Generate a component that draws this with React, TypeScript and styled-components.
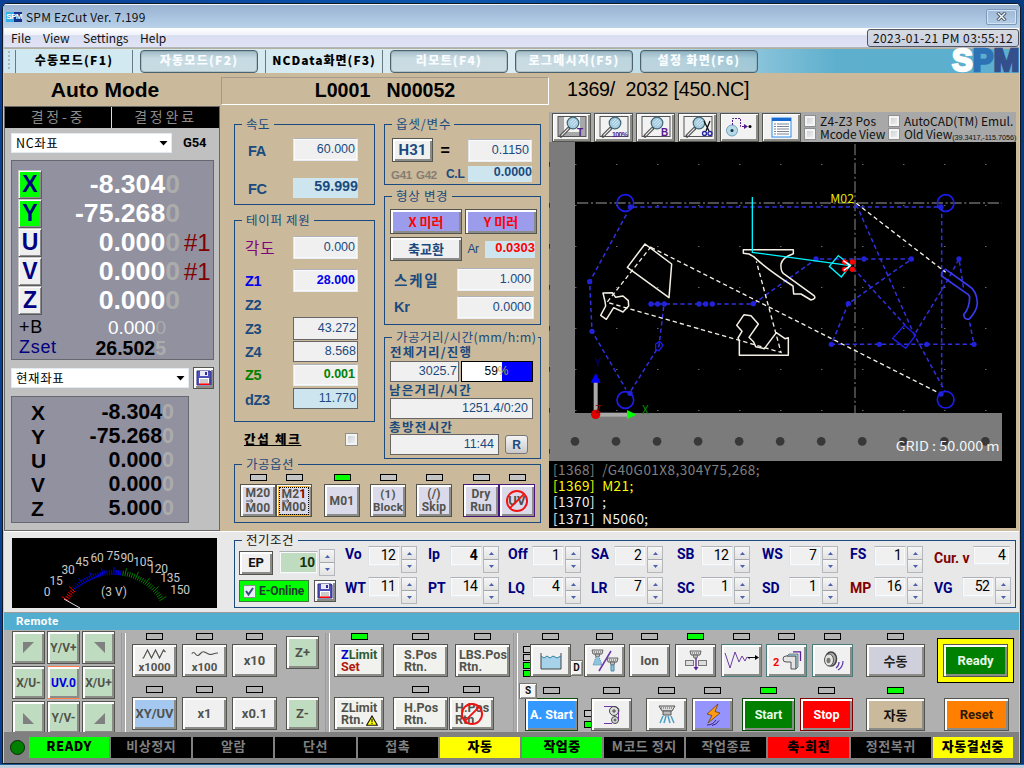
import React from 'react';
import styled, { createGlobalStyle, css } from 'styled-components';

const SANS = '"Liberation Sans", "Noto Sans CJK KR", sans-serif';
const KR = '"Noto Sans CJK KR", sans-serif';
const UI = 'Roboto, "Noto Sans CJK KR", sans-serif';

const NAVY = '#1b4a7e';
const TAN = '#cab99a';
const LIME = '#00ff00';

const Global = createGlobalStyle`
  * { box-sizing: border-box; }
  body { margin: 0; width: 1024px; height: 768px; overflow: hidden; background: #0a4fa8; font-family: ${SANS}; }
  svg { display: block; flex: none; }
`;

/* ---------- window chrome ---------- */
const Desktop = styled.div`
  width: 1024px; height: 768px; overflow: hidden;
  padding: 3px 2px 0 2px;
  background: linear-gradient(90deg, #0a3f95, #0b55ac 45%, #083c84 80%, #083a80);
`;
const Window = styled.div`
  width: 1019px; height: 761px;
  border: 1px solid #101820; border-radius: 5px 5px 0 0;
  background: #a9d4ee;
  padding: 0 1px 3px 1px;
  display: flex; flex-direction: column; overflow: hidden;
`;
const Taskbar = styled.div`
  height: 4px; margin: 0 -2px; background: #c2cddb; border-top: 1px solid #1c5f9c;
`;
const TitleBar = styled.div`
  height: 24px; flex: none; display: flex; align-items: center;
  border-top: 1px solid #f4f9ff;
  padding: 0 1px 0 2px;
  background: linear-gradient(#98b2d0, #a8c2de 50%, #bad2ea);
  font: 12px ${UI}; color: #111;
`;
const AppBadge = styled.span`
  width: 16px; height: 10px; margin-right: 4px; text-align: center;
  background: linear-gradient(90deg, #35b0e8 50%, #14338a 50%);
  color: #fff; font: bold 8px/10px ${SANS}; letter-spacing: -0.6px;
`;
const Title = styled.span`flex: 1; font: 12px/16px ${KR}; letter-spacing: 0.22px;`;
const CloseBox = styled.span`
  width: 31px; height: 16px; margin-right: 1px;
  border: 1px solid #7d99ba; border-radius: 2px; box-shadow: inset 0 0 0 1px #d5e4f3;
  display: flex; align-items: center; justify-content: center;
`;
const MenuBar = styled.div`
  height: 20px; flex: none; display: flex; align-items: center; padding-left: 7px;
  background: linear-gradient(#fff 0, #f0f2fa 35%, #d9def1 40%, #dfe3f4 90%);
  border-bottom: 1px solid #b4b6bf;
`;
const MenuItem = styled.span<{ $w: number }>`
  width: ${p => p.$w}px; font: 12px/16px ${KR}; color: #111; white-space: nowrap;
`;
const Clock = styled.span`
  margin-left: auto; width: 152px; height: 18px;
  border: 1px solid #505560; border-radius: 3px; background: linear-gradient(#d6dae0, #c9d0e2);
  font: 12px/15px ${KR}; color: #111; text-align: center; white-space: nowrap; letter-spacing: 0.42px;
`;
const ModeBar = styled.div`
  height: 25px; flex: none; display: flex; align-items: center;
  border-top: 1px solid #b3b09c;
  background: linear-gradient(90deg, #cfe8f1 0, #dcecf2 50%, #bcdce8 65%, #5eafce 82%, #5cafcf);
  padding-left: 4px;
`;
const Grip = styled.i`width: 2px; height: 20px; margin-right: 5px; background: repeating-linear-gradient(#a9b7be 0 2px, transparent 2px 4px);`;
const ModeSlot = styled.span<{ $raised?: boolean; $ls?: number }>`
  width: 118px; height: 23px; margin-right: 7px; flex: none;
  font: 900 12px/19px ${KR}; letter-spacing: ${p => p.$ls ?? 1.3}px; text-align: center; white-space: pre; color: #000;
  border-left: 1px solid #687a84; border-right: 1px solid #687a84;
  ${p => p.$raised && css`
    color: #fafdff; border: 1px solid #4d626c; border-radius: 4px; line-height: 17px;
    background: linear-gradient(rgba(110,140,155,.5), rgba(180,200,208,.45) 35%, rgba(190,205,210,.5));
    box-shadow: inset 0 0 0 1px rgba(120,145,155,.35);
  `}
`;
const Logo = styled.span`
  width: 70px; height: 24px; margin-left: auto; display: flex; align-items: center;
  font: bold 31px/24px ${SANS}; -webkit-text-stroke: 2.4px currentColor;
`;
const LogoS = styled.span`color: #fff; width: 29px; padding-left: 3px;`;
const LogoP = styled.span`color: #2d72b4; width: 23px;`;
const LogoM = styled.span`color: #34508c;`;

/* ---------- main area ---------- */
const Main = styled.div`height: 458px; flex: none; display: flex; background: ${TAN};`;
const LeftCol = styled.div`width: 216px; flex: none; display: flex; flex-direction: column;`;
const ModeTitle = styled.h1`
  margin: 0; height: 33px; padding-right: 14px; text-align: center;
  font: bold 21px/34px ${SANS}; color: #000;
`;
const LeftPanel = styled.div`
  flex: 1; border: 1px solid #676767; background: #c0c0c0; display: flex; flex-direction: column;
`;
const DecisionBar = styled.div`
  height: 21px; flex: none; display: grid; grid-template-columns: 106px 1fr; background: #000;
`;
const Decision = styled.span`
  color: #8b8b8b; font: 14px/18px ${KR}; letter-spacing: 2.8px; text-align: center;
  & + & { border-left: 1px solid #ddd; }
`;
const ComboRow = styled.div<{ $mt: number }>`
  display: flex; align-items: center; margin: ${p => p.$mt}px 0 0 6px; height: 22px; gap: 4px;
`;
const Combo = styled.span<{ $w: number }>`
  width: ${p => p.$w}px; height: 20px; background: #fff; border: 1px solid #e4eaf2;
  display: flex; align-items: center; justify-content: space-between; padding: 0 3px 0 4px;
  font: 12.5px/18px ${KR}; letter-spacing: 0.6px; color: #000;
`;
const GCode = styled.b`font: bold 13px ${UI}; margin-left: 7px; letter-spacing: -0.1px; padding-bottom: 1px;`;
const AxisPanel = styled.div<{ $w: number; $h: number; $mt: number }>`
  width: ${p => p.$w}px; height: ${p => p.$h}px; margin: ${p => p.$mt}px 0 0 6px; flex: none;
  background: #9191a0; border: 1px solid #676770; display: flex; flex-direction: column;
`;
const AxisRow = styled.div<{ $h: number }>`height: ${p => p.$h}px; display: flex; align-items: center; padding-left: 6px; flex: none;`;
const AxisKey = styled.span<{ $on?: boolean }>`
  width: 24px; height: 29px; border: 1px solid; border-color: #c8c8c8 #5b5b5b #5b5b5b #c8c8c8;
  box-shadow: inset 1px 1px 0 #fff, inset -1px -1px 0 #8c8c8c;
  background: ${p => (p.$on ? LIME : '#efefef')}; color: #000080;
  font: bold 23px/27px ${SANS}; text-align: center; flex: none;
`;
const Reading = styled.span<{ $size: number; $color: string; $w: number; $bold?: boolean; $drop?: number }>`
  width: ${p => p.$w}px; text-align: right; white-space: nowrap; line-height: 1; padding-top: ${p => p.$drop || 0}px;
  font-size: ${p => p.$size}px; font-weight: ${p => (p.$bold ? 'bold' : 'normal')}; color: ${p => p.$color};
  i { font-style: normal; color: #acacac; }
`;
const Sharp = styled.span`color: #800000; font-size: 24px; margin-left: 4px; line-height: 1;`;
const SmallAxis = styled.span<{ $c: string; $size: number }>`
  width: 42px; color: ${p => p.$c}; font-size: ${p => p.$size}px; line-height: 1; padding-left: 1px; padding-top: 1px; letter-spacing: 0.7px;
`;
const PlainAxis = styled.b`width: 30px; padding-left: 13px; font-size: 21px; line-height: 1; padding-top: 1px;`;

const MidCol = styled.div`width: 329px; flex: none; display: flex; flex-direction: column; padding-top: 4px;`;
const LineTitle = styled.h2`
  margin: 0 0 0 1px; height: 28px; border: 1px solid; border-color: #a5998d #fff #fff #a5998d;
  font: bold 19.6px/25px ${SANS}; white-space: pre; text-align: center;
`;
const GroupGrid = styled.div`display: flex; gap: 9px; padding: 19px 0 0 14px; height: 355px;`;
const GroupStack = styled.div`display: flex; flex-direction: column;`;
const Group = styled.section<{ $w: number; $h: number; $mb?: number; $mt?: number }>`
  width: ${p => p.$w}px; height: ${p => p.$h}px; margin-bottom: ${p => p.$mb || 0}px; margin-top: ${p => p.$mt || 0}px; flex: none;
  border: 1px solid ${NAVY}; display: flex; flex-direction: column; align-items: flex-start;
`;
const Legend = styled.span<{ $w: number; $bg?: string; $c?: string; $ls?: number }>`
  width: ${p => p.$w}px; height: 16px; margin: -9px 0 -7px 7px; padding-left: 4px; flex: none;
  background: ${p => p.$bg || TAN}; color: ${p => p.$c || NAVY};
  font: 12.5px/16px ${KR}; white-space: nowrap; letter-spacing: ${p => p.$ls ?? 0.5}px;
`;
const FieldRow = styled.div<{ $h: number; $mt?: number; $pl?: number }>`
  height: ${p => p.$h}px; margin-top: ${p => p.$mt || 0}px; padding-left: ${p => p.$pl ?? 10}px;
  display: flex; align-items: center; flex: none;
`;
const Caption = styled.span<{ $w: number; $c?: string; $size?: number; $kr?: boolean; $plain?: boolean; $ls?: number; $dy?: number }>`
  width: ${p => p.$w}px; color: ${p => p.$c || NAVY}; white-space: nowrap; flex: none;
  font: ${p => (p.$plain ? 'normal' : 'bold')} ${p => p.$size || 14.5}px/1.1 ${p => (p.$kr ? KR : SANS)};
  letter-spacing: ${p => p.$ls ?? (p.$kr ? 1 : -0.3)}px;
  padding-top: ${p => p.$dy ?? (p.$kr ? 0 : 2)}px;
`;
type FieldKind = 'soft' | 'line' | 'flat';
const Field = styled.span<{ $w: number; $h: number; $kind?: FieldKind; $bg?: string; $c?: string; $bold?: boolean; $size?: number; $pr?: number }>`
  width: ${p => p.$w}px; height: ${p => p.$h}px; flex: none; text-align: right; white-space: nowrap;
  background: ${p => p.$bg || '#f0f0f0'}; color: ${p => p.$c || NAVY};
  padding-right: ${p => p.$pr ?? 2}px;
  font: ${p => (p.$bold ? 'bold' : 'normal')} ${p => p.$size || 12.5}px/${p => p.$h - 3}px ${SANS};
  ${p => (p.$kind === 'line'
    ? 'border: 1px solid #666;'
    : p.$kind === 'flat'
    ? 'border: 0;'
    : 'border: 1px solid; border-color: #aeb2b8 #e0e6ec #e6eef4 #dfe4e8; box-shadow: inset 0 0 0 1px #fafafa;')}
`;
const NumField = styled(Field)`font-family: ${UI}; font-size: 14px; letter-spacing: -0.8px; padding-right: 4px;`;
const Bevel = styled.span<{ $w: number; $h: number; $bg?: string; $c?: string; $size?: number; $ring?: string; $kr?: boolean; $lh?: number; $left?: number }>`
  position: relative; flex: none;
  width: ${p => p.$w}px; height: ${p => p.$h}px; background: ${p => p.$bg || '#f0f0f0'}; color: ${p => p.$c || '#52524c'};
  border: 1px solid ${p => p.$ring || '#55554f'};
  box-shadow: inset 2px 2px 0 #fff, inset -2px -2px 0 #8b8b87;
  display: flex; align-items: center; justify-content: ${p => (p.$left ? 'flex-start' : 'center')};
  padding-left: ${p => p.$left || 0}px;
  font: bold ${p => p.$size || 13}px/${p => p.$lh || 12}px ${p => (p.$kr ? KR : UI)};
  text-align: ${p => (p.$left ? 'left' : 'center')}; white-space: pre;
`;
const Check = styled.span<{ $s?: number }>`
  width: ${p => p.$s || 13}px; height: ${p => p.$s || 13}px; flex: none;
  border: 1px solid #8e8f8f; box-shadow: inset 0 0 0 2px #f4f4f4; background: linear-gradient(135deg, #c8ccd0, #f4f4f4);
`;
const Interference = styled.div`
  display: flex; align-items: center; justify-content: space-between; width: 114px; margin: 10px 0 0 10px;
  font: 900 12.5px/14px ${KR}; text-decoration: underline; white-space: pre; letter-spacing: 1.7px;
`;
const Progress = styled.span`
  width: 72px; height: 21px; margin-left: 2px; border: 1px solid #000; flex: none;
  background: linear-gradient(90deg, #fff 57%, #0000ff 57%);
  font: 12px/19px ${SANS}; color: #000; text-align: center; padding-right: 1px;
  em { font-style: normal; color: #a8a84a; }
`;
const ResetKey = styled.span`
  width: 23px; height: 19px; margin-left: 6px; border: 1px solid #777; border-radius: 3px;
  background: linear-gradient(#f4f4f4, #dcdcdc 60%, #c8c8c8); color: ${NAVY};
  font: bold 12px/18px ${SANS}; text-align: center;
`;
const OptionGroupWrap = styled.div`padding-left: 14px; margin-top: 4px;`;
const Led = styled.i<{ $on?: boolean; $bg?: string }>`
  width: 17px; height: 7px; flex: none; border: 1px solid #000; background: ${p => (p.$on ? LIME : p.$bg || '#c4c4c4')};
`;
const Station = styled.div<{ $ml?: number; $gap?: number; $lift?: number }>`
  display: flex; flex-direction: column; align-items: center; justify-content: flex-end;
  gap: ${p => p.$gap ?? 4}px; margin-left: ${p => p.$ml || 0}px; flex: none; position: relative;
  padding-bottom: ${p => p.$lift || 0}px;
`;
const Options = styled.div`display: flex; margin: 9px 0 0 5px; letter-spacing: 0.2px;`;
const FocusRing = styled.span`
  width: 30px; height: 28px; border: 1px dotted #000; outline: 1px solid #f5b53a; line-height: 13px; text-align: center;
  em { font-style: normal; color: #800000; }
`;

/* ---------- right column ---------- */
const RightCol = styled.div`flex: 1; display: flex; flex-direction: column;`;
const FileTitle = styled.div`height: 39px; padding: 4px 0 0 18px; font: 19.7px/24px ${SANS}; white-space: pre; letter-spacing: -0.25px;`;
const ViewBar = styled.div`width: 467px; height: 30px; flex: none; display: flex; align-items: center; background: #a8a8a8; padding-left: 3px; gap: 3px;`;
const ToolKey = styled.span`
  width: 39px; height: 29px; background: #f2f2f2; border: 1px solid #55554f; flex: none;
  box-shadow: inset 1px 1px 0 #fff, inset -2px -2px 0 #8b8b87;
  display: flex; align-items: center; justify-content: center;
`;
const ViewChecks = styled.div`
  display: grid; grid-template-columns: 84px 1fr; grid-auto-rows: 13px; flex: 1; align-content: center;
  font: 12px/13px ${KR}; color: #111;
`;
const ViewCheck = styled.label<{ $ls?: number }>`display: flex; align-items: center; gap: 4px; white-space: nowrap; letter-spacing: ${p => p.$ls ?? 0}px;`;
const Coord = styled.small`font: 7.3px/8px ${SANS}; align-self: flex-end; margin: 0 0 -2px -4px; letter-spacing: -0.08px;`;
const Program = styled.div`
  width: 467px; height: 66px; background: #000; padding: 0 0 0 4px; flex: none;
  font: 400 13.5px/14px ${KR}; white-space: pre; letter-spacing: 0.5px;
`;
const ProgramLine = styled.div<{ $c: string }>`color: ${p => p.$c}; height: 16.2px;`;

/* ---------- electric conditions ---------- */
const Electric = styled.div`
  height: 82px; flex: none; display: flex; background: #e8e8e8; border-top: 1px solid #fff; border-bottom: 1px solid #9a9a9a;
`;
const Meter = styled.div`width: 205px; height: 70px; margin: 6px 17px 0 8px; background: #000; flex: none;`;
const ElectricBody = styled.div`display: flex; width: 100%;`;
const EpBlock = styled.div`width: 110px; flex: none; display: flex; flex-direction: column; padding: 8px 0 0 4px;`;
const EpRow = styled.div<{ $mt?: number }>`display: flex; align-items: center; margin-top: ${p => p.$mt || 0}px;`;
const Online = styled.span`
  width: 70px; height: 22px; background: ${LIME}; border: 1px solid #3a7a3a; display: flex; align-items: center; gap: 3px; padding-left: 3px;
  font: bold 12px ${UI}; color: #1d3a2c; margin-right: 5px; white-space: nowrap; letter-spacing: -0.1px;
`;
const Params = styled.div`
  display: grid; grid-template-columns: 83px 80px 83px 86px 85px 88px 84px 1fr; grid-template-rows: 31px 31px; padding-top: 5px; flex: 1;
`;
const Param = styled.div`display: flex; align-items: flex-start;`;
const ParamName = styled.b<{ $w: number; $c?: string; $pt?: number }>`
  width: ${p => p.$w}px; padding-top: ${p => p.$pt ?? 1}px; color: ${p => p.$c || '#000080'}; font: bold 14px/15px ${UI}; white-space: nowrap; letter-spacing: 0;
`;
const Spin = styled.span`width: 16px; height: 27px; margin-left: 1px; display: flex; flex-direction: column; border: 1px solid #b4b8bc; background: #f6f6f6; flex: none;`;
const SpinHalf = styled.i`
  flex: 1; display: flex; align-items: center; justify-content: center; background: linear-gradient(#f6f6f6, #e2e2e2);
  & + & { border-top: 1px solid #a4a8ac; }
`;

/* ---------- remote ---------- */
const RemoteHead = styled.div`height: 17px; flex: none; background: #52aed0; color: #fff; font: bold 11.5px/16px ${UI}; padding-left: 12px; letter-spacing: 0.4px;`;
const Remote = styled.div`height: 102px; flex: none; display: flex; background: #b0b0b0; overflow: hidden;`;
const JogPad = styled.div`
  display: grid; grid-template-columns: repeat(3, 33px); grid-auto-rows: 33px; gap: 2px; padding: 1px 6px 0 8px; width: 117px; flex: none;
`;
const Section = styled.div<{ $w: number }>`
  width: ${p => p.$w}px; flex: none; margin-top: 3px; border-left: 1px solid #9a9a9a; box-shadow: inset 1px 0 0 #b0b0b0, inset 3px 0 0 #a8a8a8, inset 4px 0 0 #fff;
  display: flex; flex-direction: column;
`;
const KeyRow = styled.div<{ $mt?: number; $pl: number }>`display: flex; align-items: flex-end; height: 44px; flex: none; margin-top: ${p => p.$mt || 0}px; padding-left: ${p => p.$pl}px;`;
const ReadyFrame = styled.div`
  width: 77px; height: 45px; margin: 0 0 -6px 12px; background: #ffff00; border: 1px solid #000; display: flex; align-items: center; justify-content: center; flex: none;
`;
const SideLeds = styled.div<{ $gap: number; $pb?: number; $ml?: number }>`
  display: flex; flex-direction: column; gap: ${p => p.$gap}px; width: 7px; margin-left: ${p => p.$ml || 0}px; padding-bottom: ${p => p.$pb || 0}px; flex: none;
  i { width: 8px; height: 7px; border: 1px solid #000; background: #c4c4c4; }
  i[data-on='1'] { background: ${LIME}; }
`;
const MiniKey = styled.span<{ $x: number; $y: number; $w: number }>`
  position: absolute; left: ${p => p.$x}px; top: ${p => p.$y}px; width: ${p => p.$w}px; height: 16px; z-index: 2;
  background: #f4f4f4; border: 1px solid #77776f; box-shadow: inset 1px 1px 0 #fff, inset -1px -1px 0 #999;
  font: bold 10px/14px ${UI}; text-align: center; color: #111;
`;
const Overlay = styled.svg`position: absolute; left: 50%; top: 50%; transform: translate(-50%, -50%);`;
const RedText = styled.span`color: #b01c10;`;
const BlueText = styled.span`color: #0000d0;`;
const GreenText = styled.span`color: #2c5c34;`;
const WarnSpot = styled.span`position: absolute; left: 31px; top: 17px;`;

const StatusBar = styled.div`height: 31px; flex: none; background: #808080; display: flex; align-items: center; padding: 0 6px 0 6px;`;
const StatusLamp = styled.i`width: 15px; height: 15px; border-radius: 50%; background: #008000; border: 1px solid #062a06; margin-right: 4px; flex: none;`;
const StatusGrid = styled.div`flex: 1; display: grid; grid-template-columns: repeat(12, 1fr); gap: 2px;`;
const StatusCell = styled.span<{ $bg?: string }>`
  height: 21px; background: ${p => p.$bg || '#000'}; color: ${p => (p.$bg ? '#000' : '#808080')};
  font: ${p => (p.$bg ? 900 : 700)} 13px/18px ${KR}; letter-spacing: 0.5px; text-align: center; white-space: nowrap;
`;

/* ---------- icons ---------- */
const Floppy = () => (
  <svg width="16" height="16" viewBox="0 0 16 16">
    <path d="M1 1h13l1 1v13H1z" fill="#5050b8" stroke="#30308c" />
    <rect x="4" y="1" width="8" height="5" fill="#e8e8f8" /><rect x="9" y="2" width="2" height="3" fill="#30308c" />
    <rect x="3" y="8" width="10" height="7" fill="#fff" /><path d="M4 10h8M4 12h8" stroke="#999" /><path d="M3 14.2h10" stroke="#f00" strokeWidth="1.6" />
  </svg>
);
const Caret = () => <svg width="9" height="5"><path d="M0.5 0h8l-4 4.5z" /></svg>;

const Magnifier = ({ tag }: { tag: string }) => (
  <svg width="34" height="24" viewBox="0 0 34 24">
    <rect x="3" y="1.5" width="28" height="20" fill={tag === 'T' ? '#a8a8a8' : '#f2f2f2'} stroke="#555" />
    {tag === 'T' && <path d="M9 2v15h16V2" fill="#f2f2f2" />}
    <path d="M14 13L6 21" stroke="#4c4c4c" strokeWidth="3.2" strokeLinecap="round" /><path d="M13.6 13.4L6.4 20.6" stroke="#f0f0f0" strokeWidth="1.3" />
    <circle cx="18" cy="8" r="5.8" fill="#a9cde0" stroke="#3f6674" strokeWidth="1.2" />
    <path d="M15 8l4-4M16 10l5-5M18 11l4-4" stroke="#dceef8" strokeWidth=".8" />
    {tag === '100' && <text x="15" y="22" fontSize="7" fontWeight="bold" fill="#551a8b" textLength="16">100%</text>}
    {tag === 'T' && <text x="22" y="21" fontSize="10" fontWeight="bold" fill="#551a8b">T</text>}
    {tag === 'B' && <text x="22" y="21" fontSize="10" fontWeight="bold" fill="#551a8b">B</text>}
    {tag === 'cut' && <g fill="none" strokeWidth="1.3"><path d="M23 6l5 10M29 6l-4 10" stroke="#111" /><circle cx="23.5" cy="18.5" r="2" stroke="#2424a0" /><circle cx="29" cy="18.5" r="2" stroke="#2424a0" /></g>}
  </svg>
);
const TraceIcon = () => (
  <svg width="30" height="24" viewBox="0 0 30 24">
    <circle cx="7" cy="15.5" r="5.5" fill="#b7d8e6" stroke="#6da4ba" /><circle cx="7" cy="15.5" r="1.5" fill="#134" />
    <path d="M7.5 10V3.500h8v8h5" fill="none" stroke="#551a8b" strokeDasharray="2 1" /><path d="M19 9l4 2.500-4 2.500z" fill="#551a8b" /><circle cx="25" cy="11.5" r="1.5" />
  </svg>
);
const ListIcon = () => (
  <svg width="22" height="21" viewBox="0 0 22 21">
    <rect x="1" y="1" width="19" height="19" fill="#fff" stroke="#2a8ae8" /><rect x="1" y="1" width="19" height="3" fill="#1769d0" />
    {[7, 9.5, 12, 14.5, 17].map(y => <path key={y} d={`M3 ${y}h2M6 ${y}h12`} stroke="#7a8494" />)}
  </svg>
);
const SpinButtons = () => (
  <Spin>
    <SpinHalf><svg width="5" height="3"><path d="M0 3L2.500 0 5 3z" fill="#4a62ae" /></svg></SpinHalf>
    <SpinHalf><svg width="5" height="3"><path d="M0 0L2.500 3 5 0z" fill="#4a62ae" /></svg></SpinHalf>
  </Spin>
);
const NoSign = ({ d = 23 }: { d?: number }) => (
  <Overlay width={d} height={d} viewBox="0 0 24 24"><circle cx="12" cy="12" r="10.5" fill="none" stroke="#f01414" strokeWidth="2" /><path d="M4.500 19.500L19.500 4.500" stroke="#f01414" strokeWidth="2" /></Overlay>
);
const StepArrow = () => (
  <Overlay width="30" height="6" viewBox="0 0 30 6"><path d="M3 3h6M7.500 1L10 3 7.500 5" fill="none" stroke="#52524c" /></Overlay>
);
const Head = () => <><path d="M0 0h11l-1 4H1z" fill="#ddd" stroke="#555" strokeWidth=".9" /><path d="M2 2h7" stroke="#555" strokeDasharray="1 1" /><path d="M3 4h5l-1 3H4z" fill="#bbb" stroke="#555" strokeWidth=".8" /></>;
const TankIcon = () => (
  <svg width="22" height="18" viewBox="0 0 22 18"><path d="M1 4l3 2 3-2 3 2 3-2 4 2 4-2v13H1z" fill="#a6d3ea" /><path d="M1 1v16h20V1" fill="none" stroke="#444" /><path d="M1 4l3 2 3-2 3 2 3-2 4 2 4-2" fill="none" stroke="#2d7fa4" /></svg>
);
const SprayPair = () => (
  <svg width="28" height="24" viewBox="0 0 28 24"><g transform="translate(1 1)"><Head /><path d="M4 7l-3 8h9L7 7" fill="#8fc4de" stroke="#4c8ca8" strokeDasharray="1 1" /></g><path d="M8 22L20 2" stroke="#6a35a8" strokeWidth="1.5" /><g transform="translate(16 9)"><Head /><path d="M4 7h3v6H4z" fill="#8fc4de" stroke="#4c8ca8" /></g></svg>
);
const CutIcon = () => (
  <svg width="22" height="22" viewBox="0 0 22 22"><g transform="translate(5 1)"><Head /></g><rect x=".5" y="10.5" width="8" height="5" fill="#ddd" stroke="#777" /><rect x="13.5" y="10.5" width="8" height="5" fill="#ddd" stroke="#777" /><path d="M11 8v10" stroke="#5a1d98" strokeWidth="1.3" /><path d="M8.500 17h5L11 20.500z" fill="#5a1d98" /></svg>
);
const WaveArrow = () => (
  <svg width="36" height="20" viewBox="0 0 36 20"><path d="M1 2l5 15L11 1l4 10 3-6 3 5 2-4 3 2" fill="none" stroke="#6d3ca4" /><path d="M24 6.500h9" stroke="#111" /><path d="M31 4L35 6.500 31 9z" /></svg>
);
const CornerIcon = () => (
  <svg width="32" height="20" viewBox="0 0 32 20"><text x="2" y="15" fontSize="11" fontWeight="bold" fill="#f00">2</text><path d="M15 5h10v13h-5v-7h-5a3 3 0 0 1 0-6z" fill="#e4e4e4" stroke="#555" /><path d="M16 5l2-2h9v13l-2 2V5z" fill="#9ccce0" stroke="#555" strokeWidth=".7" /><path d="M22 .8h7.500V10" fill="none" stroke="#5a1d98" strokeWidth="1.3" /></svg>
);
const BuzzerIcon = () => (
  <svg width="22" height="20" viewBox="0 0 22 20"><ellipse cx="9" cy="8" rx="5.5" ry="7" fill="#aaa" stroke="#444" strokeWidth="1.5" /><ellipse cx="7" cy="9" rx="4.5" ry="6" fill="#e4e4e0" stroke="#555" /><ellipse cx="6.5" cy="9.5" rx="2" ry="2.8" fill="#777" /><path d="M14 17q3-2 3-6M16 19q5-3 5-9" fill="none" stroke="#5a35a8" strokeWidth="1.2" /></svg>
);
const BeltIcon = () => (
  <svg width="18" height="20" viewBox="0 0 18 20"><path d="M1 1.500h10M1 18.500h8" stroke="#6a35a8" strokeWidth="1.2" /><circle cx="11" cy="6" r="4.5" fill="#ddd" stroke="#444" /><circle cx="12" cy="15" r="3.5" fill="#ddd" stroke="#444" /><path d="M9 6h4M11 4v4M10.500 15h3M12 13.500v3" stroke="#444" /><path d="M15.500 6v9" stroke="#6a35a8" /><path d="M11 1.500q5 0 5 5" fill="none" stroke="#444" /></svg>
);
const SprayIcon = () => (
  <svg width="20" height="20" viewBox="0 0 20 20"><path d="M2 1h16l-3 5H5z" fill="#ddd" stroke="#555" /><path d="M4 3h12" stroke="#555" strokeDasharray="1 1" /><path d="M6 6h8v4H6z" fill="#bbb" stroke="#555" /><path d="M6 11L3 18M9 11l-2 7M11 11l2 7M14 11l3 7" stroke="#4ca0c4" strokeWidth="1.5" /></svg>
);
const BoltIcon = () => (
  <svg width="20" height="24" viewBox="0 0 20 24"><path d="M15 1L4 11l5 1.500L5 20 17 10l-5-1.500z" fill="#ff9c14" stroke="#6b4010" strokeWidth=".8" /><path d="M4 22q6 0 9-5M9 22.500q5-1 7-5" fill="none" stroke="#402080" /></svg>
);
const Ripple = ({ small }: { small?: boolean }) => (
  <svg width="27" height="10" viewBox="0 0 27 10"><path d={small ? 'M0 5q2-3 4 0t4.500 0 4.500-2 4 2 4.500 0 5-1' : 'M1 9h1L6 1l4 8 4-8 4 8 4-8 2 2'} fill="none" stroke="#52524c" strokeWidth="1.2" /></svg>
);
const Warn = () => <svg width="12" height="11" viewBox="0 0 11 10"><path d="M5.500 .8L10.400 9.300H.6z" fill="#ff0" stroke="#111" /><path d="M5.500 3.500v3M5.500 7.200v1" stroke="#111" /></svg>;
const Arrow45 = ({ r }: { r: number }) => <svg width="12" height="12" viewBox="0 0 12 12"><path d="M0 0h11L0 11z" fill="#808080" transform={`rotate(${r} 6 6)`} /></svg>;
const CloseX = () => <svg width="11" height="9" viewBox="0 0 11 9"><path d="M1.500 .5l8 8M9.500 .5l-8 8" stroke="#4a5868" strokeWidth="3.2" /><path d="M2 1l7 7M9 1L2 8" stroke="#f4f8fc" strokeWidth="1.4" /></svg>;

/* ---------- plotted path ---------- */
const gridDots: [number, number][] = [];
for (let i = 0; i < 11; i++) for (let j = 0; j < 7; j++) gridDots.push([91 + i * 123, 73 + j * 123]);

const Plot = () => (
  <svg width="467" height="320" viewBox="12 6 1401 960" fill="none">
    <rect x="12" y="6" width="1401" height="960" fill="#000" />
    <path d="M12 6h78v813h1281v144H12z" fill="#7b7b7b" />
    {[73, 196, 319, 442, 565, 688, 811, 934].map(y => <rect key={y} x="12" y={y - 7} width="3" height="14" fill="#333" />)}
    {gridDots.map(([x, y]) => <rect key={`${x}-${y}`} x={x} y={y - 1} width="3" height="3" fill="#999" />)}
    {Array.from({ length: 11 }, (_, i) => <circle key={i} cx={90 + i * 123.1} cy="904" r="13" fill="#383838" />)}
    <path d="M96 189H1371M930 12V819" stroke="#686868" strokeWidth="4" strokeDasharray="34 8 6 8" />
    <g stroke="#1c1cf0" strokeWidth="5">
      {[[241, 189], [1202, 189], [241, 780], [1202, 779]].map(([x, y]) => <circle key={`${x}${y}`} cx={x} cy={y} r="25" />)}
    </g>
    <g stroke="#3030e0" strokeWidth="4.5" strokeDasharray="13 9">
      <path d="M264 201H1190V750M244 224L134 425l7 149 102 174M258 752l84-134 15-126M318 492H625L813 357H1100L910 491l-51 122H1287l-15-75M934 194l175 393 90 165M925 385L1080 555M1112 578L1205 426 1242 357l14 90" />
    </g>
    <g fill="#2222d8">
      {[[134, 425], [141, 574], [318, 492], [338, 492], [358, 492], [462, 492], [482, 492], [502, 492], [625, 491], [813, 357], [957, 357], [1099, 357], [910, 491], [859, 613], [1003, 613], [1145, 613], [1287, 613], [1242, 357], [256, 201], [1188, 201], [255, 760], [1188, 762]].map(([x, y]) => <circle key={`${x}${y}`} cx={x} cy={y} r="8" />)}
    </g>
    <path d="M1078 556l34 29-30 40-39-30zM332 612l12-8 10 12-12 16-10-2z" stroke="#1c1cf0" strokeWidth="4" />
    <path d="M1202 388L1272 438Q1296 452 1297 490Q1296 512 1274 536Q1258 542 1256 524Q1274 504 1274 470L1270 464L1190 408Q1188 394 1202 388z" stroke="#3a3af0" strokeWidth="5" strokeLinejoin="round" />
    <g stroke="#f4f0e6" strokeWidth="4" strokeDasharray="13 9">
      <path d="M318 320L186 487 708 637 634 364M318 322L1180 758M934 190L1202 397" />
    </g>
    <g stroke="#f4f0e6" strokeWidth="4.5" strokeLinejoin="round">
      <path d="M300 312L380 372 372 473 247 382z" />
      <path d="M174 459L202 458 212 472 234 468 250 482 251 498 234 516 206 503 184 538 167 526 182 498 180 484z" />
      <path d="M595 329H745V341Q712 352 708 372Q706 398 720 404L806 466Q816 476 798 480L768 462 746 462 744 438Q664 386 626 350L612 342 595 340z" />
      <path d="M583 646H730V593L720 596 694 578 658 626 632 620 626 606 612 592 640 552 618 527 597 524 575 556 591 574 579 594 583 602z" />
    </g>
    <path d="M622 171V337L917 377M880 347l37 28-28 36-36-32z" stroke="#00f4ff" strokeWidth="4" />
    <g fill="#f00"><circle cx="899" cy="366" r="8" /><circle cx="922" cy="366" r="8" /><circle cx="899" cy="388" r="8" /><circle cx="922" cy="388" r="8" /></g>
    <path d="M895 362l21 15-20 14" stroke="#fff" strokeWidth="4" />
    <path d="M152 815V725" stroke="#aaa" strokeWidth="12" /><path d="M160 824h92" stroke="#aaa" strokeWidth="12" />
    <path d="M137 728l15-29 15 29z" fill="#0000ff" /><path d="M246 810l29 14-29 13z" fill="#00ff00" /><circle cx="152" cy="823" r="14" fill="#d00" />
    <g fontFamily="Noto Sans CJK KR" fontWeight="400" fontSize="35">
      <text x="856" y="189" fill="#e8e800" textLength="71" lengthAdjust="spacingAndGlyphs">M02</text>
      <text x="291" y="823" fill="#008a00">X</text><text x="150" y="680" fill="#00007a">Y</text><text x="150" y="818" fill="#900000" fontSize="30">Z</text>
      <text x="1052" y="932" fill="#f4f4f4" fontSize="39" textLength="312" lengthAdjust="spacingAndGlyphs">GRID : 50.000 m</text>
    </g>
  </svg>
);

const meterLabels: [string, number, number][] = [['0', 35, 58], ['15', 44, 47], ['30', 56, 36], ['45', 70, 28], ['60', 85, 24], ['75', 101, 22], ['90', 115, 24], ['105', 131, 28], ['120', 146, 35], ['135', 158, 44], ['150', 168, 56]];
const MeterFace = () => {
  const ticks = Array.from({ length: 51 }, (_, i) => {
    const a = Math.PI * (0.828 - (i / 50) * 0.656);
    const long = i % 5 === 0;
    const cx = 102, cy = 90, r0 = 53, r1 = long ? 61 : 58;
    return { x1: cx + r0 * Math.cos(a), y1: cy - r0 * Math.sin(a), x2: cx + r1 * Math.cos(a), y2: cy - r1 * Math.sin(a), c: i < 6 ? '#f00' : i < 29 ? '#0000f0' : '#008000' };
  });
  return (
    <svg width="205" height="70">
      {ticks.map((t, i) => <line key={i} x1={t.x1} y1={t.y1} x2={t.x2} y2={t.y2} stroke={t.c} strokeWidth="1" />)}
      <path d="M52 61l16 9" stroke="#ddd" />
      <g fill="#c8c8c8" fontSize="12" fontFamily="Roboto" textAnchor="middle">
        {meterLabels.map(([t, x, y]) => <text key={t} x={x} y={y} letterSpacing="-0.3">{t}</text>)}
        <text x="102" y="58">(3 V)</text>
      </g>
    </svg>
  );
};

/* ---------- data ---------- */
const axes = [
  { k: 'X', v: '-8.304', on: true }, { k: 'Y', v: '-75.268', on: true },
  { k: 'U', v: '0.000', sharp: true }, { k: 'V', v: '0.000', sharp: true }, { k: 'Z', v: '0.000' },
];
const current: [string, string][] = [['X', '-8.304'], ['Y', '-75.268'], ['U', '0.000'], ['V', '0.000'], ['Z', '5.000']];
const params: { n: string; v: string; w: number; bold?: boolean; red?: boolean }[] = [
  { n: 'Vo', v: '12', w: 23 }, { n: 'Ip', v: '4', w: 22, bold: true }, { n: 'Off', v: '1', w: 24 }, { n: 'SA', v: '2', w: 23 },
  { n: 'SB', v: '12', w: 24 }, { n: 'WS', v: '7', w: 27 }, { n: 'FS', v: '1', w: 24 },
];
const params2: typeof params = [
  { n: 'WT', v: '11', w: 23 }, { n: 'PT', v: '14', w: 22 }, { n: 'LQ', v: '4', w: 24 }, { n: 'LR', v: '7', w: 23 },
  { n: 'SC', v: '1', w: 24 }, { n: 'SD', v: '1', w: 27 }, { n: 'MP', v: '16', w: 24, red: true },
];
const statuses: [string, string?][] = [
  ['READY', LIME], ['비상정지'], ['알람'], ['단선'], ['접촉'], ['자동', '#ffff00'], ['작업중', LIME],
  ['M코드 정지'], ['작업종료'], ['축-회전', '#ff0000'], ['정전복귀'], ['자동결선중', '#ffff00'],
];

const PALE = '#f1f2ee';
const TEAL = '#4a7c7c';
const GREENISH = '#c0dcc0';
const ICE = '#cde5ef';
const LILAC = '#dadaea';

const LeftArea = () => (
  <LeftCol>
    <ModeTitle>Auto Mode</ModeTitle>
    <LeftPanel>
      <DecisionBar><Decision>결정-중</Decision><Decision>결정완료</Decision></DecisionBar>
      <ComboRow $mt={4}><Combo $w={161}>NC좌표<Caret /></Combo><GCode>G54</GCode></ComboRow>
      <AxisPanel $w={203} $h={200} $mt={6}>
        <AxisRow $h={9} />
        {axes.map(a => (
          <AxisRow key={a.k} $h={29}>
            <AxisKey $on={a.on}>{a.k}</AxisKey>
            <Reading $w={138} $size={26.6} $color="#fff" $bold>{a.v}<i>0</i></Reading>
            {a.sharp && <Sharp>#1</Sharp>}
          </AxisRow>
        ))}
        <AxisRow $h={22}><SmallAxis $c="#000" $size={18}>+B</SmallAxis><Reading $w={106} $size={19} $color="#fff" $drop={3}>0.000<i>0</i></Reading></AxisRow>
        <AxisRow $h={19}><SmallAxis $c="#000080" $size={18}>Zset</SmallAxis><Reading $w={106} $size={19.5} $color="#000" $bold $drop={4}>26.502<i>5</i></Reading></AxisRow>
      </AxisPanel>
      <ComboRow $mt={7}><Combo $w={178}>현재좌표<Caret /></Combo><Bevel $w={21} $h={22}><Floppy /></Bevel></ComboRow>
      <AxisPanel $w={178} $h={127} $mt={7}>
        <AxisRow $h={3} />
        {current.map(([k, v]) => (
          <AxisRow key={k} $h={24}><PlainAxis>{k}</PlainAxis><Reading $w={126} $size={21.4} $color="#000" $bold $drop={1}>{v}<i>0</i></Reading></AxisRow>
        ))}
      </AxisPanel>
    </LeftPanel>
  </LeftCol>
);

const OptionKeys = () => (
  <Options>
    <Station $gap={3}><Led /><Bevel $w={36} $h={33} $bg={LILAC} $lh={15} $size={12}>{'M20\nM00'}<StepArrow /></Bevel></Station>
    <Station $gap={3}><Led /><Bevel $w={36} $h={33} $bg={LILAC} $size={12}><FocusRing>M2<em>1</em>{'\n'}M00</FocusRing><StepArrow /></Bevel></Station>
    <Station $gap={3} $ml={12}><Led $on /><Bevel $w={36} $h={33} $bg={LILAC} $size={12}>M01</Bevel></Station>
    <Station $gap={3} $ml={10}><Led /><Bevel $w={36} $h={33} $bg={LILAC} $lh={13} $size={11.5}>{'(1)\nBlock'}</Bevel></Station>
    <Station $gap={3} $ml={10}><Led /><Bevel $w={36} $h={33} $bg={LILAC} $lh={13} $size={12}>{'(/)\nSkip'}</Bevel></Station>
    <Station $gap={3} $ml={11}><Led /><Bevel $w={36} $h={33} $bg={LILAC} $lh={13} $size={12} $ring="#46147c">{'Dry\nRun'}</Bevel></Station>
    <Station $gap={3}><Led /><Bevel $w={36} $h={33} $bg={LILAC} $ring="#46147c">UV<NoSign /></Bevel></Station>
  </Options>
);

const MiddleArea = () => (
  <MidCol>
    <LineTitle>{'L0001   N00052'}</LineTitle>
    <GroupGrid>
      <GroupStack>
        <Group $w={141} $h={81} $mb={15}>
          <Legend $w={32}>속도</Legend>
          <FieldRow $h={23} $mt={13} $pl={13}><Caption $w={45} $dy={5}>FA</Caption><Field $w={65} $h={23}>60.000</Field></FieldRow>
          <FieldRow $h={20} $mt={17} $pl={13}><Caption $w={45} $dy={3}>FC</Caption><Field $w={65} $h={20} $kind="flat" $bg={ICE} $bold $size={14.3} $pr={0}>59.999</Field></FieldRow>
        </Group>
        <Group $w={141} $h={202}>
          <Legend $w={72} $ls={0.7}>테이퍼 제원</Legend>
          <FieldRow $h={23} $mt={15}><Caption $w={48} $c="#800080" $kr $size={15.5} $plain>각도</Caption><Field $w={65} $h={23}>0.000</Field></FieldRow>
          <FieldRow $h={23} $mt={10}><Caption $w={48} $c="#0000ee">Z1</Caption><Field $w={65} $h={23} $c="#0000ee" $bold>28.000</Field></FieldRow>
          <FieldRow $h={23} $mt={1}><Caption $w={48}>Z2</Caption></FieldRow>
          <FieldRow $h={23} $mt={1}><Caption $w={48}>Z3</Caption><Field $w={65} $h={23} $kind="line" $pr={1}>43.272</Field></FieldRow>
          <FieldRow $h={21} $mt={1}><Caption $w={48} $dy={3}>Z4</Caption><Field $w={65} $h={21} $kind="line" $pr={1}>8.568</Field></FieldRow>
          <FieldRow $h={22} $mt={2}><Caption $w={48} $c="#008000">Z5</Caption><Field $w={65} $h={22} $c="#008000" $bold>0.001</Field></FieldRow>
          <FieldRow $h={21} $mt={2}><Caption $w={48} $dy={4}>dZ3</Caption><Field $w={65} $h={21} $kind="line" $bg={ICE} $pr={1}>11.770</Field></FieldRow>
        </Group>
        <Interference>간섭 체크<Check /></Interference>
      </GroupStack>
      <GroupStack>
        <Group $w={157} $h={61} $mb={11}>
          <Legend $w={62} $ls={0.9}>옵셋/변수</Legend>
          <FieldRow $h={24} $mt={13} $pl={7}><Bevel $w={41} $h={24} $c={NAVY} $size={15}>H31</Bevel><Caption $w={35} $c="#000" $size={16} $ls={-0.7}>{'\u00a0\u00a0='}</Caption><Field $w={64} $h={23}>0.1150</Field></FieldRow>
          <FieldRow $h={16} $mt={4} $pl={6}><Caption $w={25} $size={11.5} $c="#857d72">G41</Caption><Caption $w={30} $size={11.5} $c="#857d72">G42</Caption><Caption $w={22} $size={12}>C.L</Caption><Field $w={64} $h={16} $kind="flat" $bg={ICE} $bold $pr={0}>0.0000</Field></FieldRow>
        </Group>
        <Group $w={157} $h={129} $mb={12}>
          <Legend $w={60} $ls={0.7}>형상 변경</Legend>
          <FieldRow $h={25} $mt={12} $pl={5}><Bevel $w={72} $h={25} $bg="#9c9cec" $c="#f00" $kr>X 미러</Bevel><Caption $w={3}> </Caption><Bevel $w={72} $h={25} $bg="#9c9cec" $c="#f00" $kr>Y 미러</Bevel></FieldRow>
          <FieldRow $h={24} $mt={3} $pl={5}><Bevel $w={72} $h={24} $c={NAVY} $kr>축교환</Bevel><Caption $w={23} $plain $size={12}>{'\u00a0 Ar'}</Caption><Field $w={50} $h={17} $kind="flat" $bg={ICE} $c="#f00" $bold $size={13} $pr={0}>0.0303</Field></FieldRow>
          <FieldRow $h={23} $mt={7} $pl={9}><Caption $w={63} $kr $size={14.5} $ls={1.8}>스케일</Caption><Field $w={77} $h={23}>1.000</Field></FieldRow>
          <FieldRow $h={23} $mt={5} $pl={9}><Caption $w={63} $dy={0}>Kr</Caption><Field $w={77} $h={23}>0.0000</Field></FieldRow>
        </Group>
        <Group $w={157} $h={122}>
          <Legend $w={146} $ls={0.5}>가공거리/시간(mm/h:m)</Legend>
          <FieldRow $h={16} $mt={6} $pl={5}><Caption $w={100} $kr $size={12.5} $ls={1.2}>전체거리/진행</Caption></FieldRow>
          <FieldRow $h={21} $mt={1} $pl={5}><Field $w={69} $h={21} $kind="line" $pr={1}>3025.7</Field><Progress>59<em>%</em></Progress></FieldRow>
          <FieldRow $h={15} $pl={4}><Caption $w={100} $kr $size={12.5} $ls={1.3}>남은거리/시간</Caption></FieldRow>
          <FieldRow $h={21} $mt={1} $pl={5}><Field $w={143} $h={21} $kind="line" $pr={4}>1251.4/0:20</Field></FieldRow>
          <FieldRow $h={15} $pl={4}><Caption $w={100} $kr $size={12.5} $ls={1.4}>총방전시간</Caption></FieldRow>
          <FieldRow $h={21} $pl={5}><Field $w={109} $h={21} $kind="line" $pr={4}>11:44</Field><ResetKey>R</ResetKey></FieldRow>
        </Group>
      </GroupStack>
    </GroupGrid>
    <OptionGroupWrap>
      <Group $w={307} $h={59}><Legend $w={56}>가공옵션</Legend><OptionKeys /></Group>
    </OptionGroupWrap>
  </MidCol>
);

const RightArea = () => (
  <RightCol>
    <FileTitle>{'1369/  2032 [450.NC]'}</FileTitle>
    <ViewBar>
      <ToolKey><Magnifier tag="T" /></ToolKey><ToolKey><Magnifier tag="100" /></ToolKey><ToolKey><Magnifier tag="B" /></ToolKey>
      <ToolKey><Magnifier tag="cut" /></ToolKey><ToolKey><TraceIcon /></ToolKey><ToolKey><ListIcon /></ToolKey>
      <ViewChecks>
        <ViewCheck $ls={0.2}><Check $s={12} />Z4-Z3 Pos</ViewCheck><ViewCheck><Check $s={12} />AutoCAD(TM) Emul.</ViewCheck>
        <ViewCheck $ls={-0.1}><Check $s={12} />Mcode View</ViewCheck><ViewCheck $ls={-0.1}><Check $s={12} />Old View<Coord>(39.3417,-115.7056)</Coord></ViewCheck>
      </ViewChecks>
    </ViewBar>
    <Plot />
    <Program>
      <ProgramLine $c="#808080">[1368]  /G40G01X8,304Y75,268;</ProgramLine>
      <ProgramLine $c="#ffff00">[1369]  M21;</ProgramLine>
      <ProgramLine $c="#f2f2f2">[1370]  ;</ProgramLine>
      <ProgramLine $c="#f2f2f2">[1371]  N5060;</ProgramLine>
    </Program>
  </RightCol>
);

const ElectricArea = () => (
  <Electric>
    <Meter><MeterFace /></Meter>
    <Group $w={782} $h={68} $mt={8}>
      <Legend $w={56} $bg="#e8e8e8" $c="#111">전기조건</Legend>
      <ElectricBody>
        <EpBlock>
          <EpRow><Bevel $w={34} $h={24} $c="#111">EP</Bevel><Caption $w={6}> </Caption><Field $w={39} $h={23} $bg={GREENISH} $c="#123512" $bold $size={14}>10</Field><SpinButtons /></EpRow>
          <EpRow $mt={4}><Online><svg width="13" height="13"><rect x=".5" y=".5" width="12" height="12" fill="#e6eef4" stroke="#8e8f8f" /><path d="M3 6l2.500 3.500L10 3" fill="none" stroke="#344a7c" strokeWidth="2" /></svg>E-Online</Online><Bevel $w={22} $h={22}><Floppy /></Bevel></EpRow>
        </EpBlock>
        <Params>
          {params.map(p => <Param key={p.n}><ParamName $w={p.w}>{p.n}</ParamName><NumField $w={32} $h={20} $c="#000" $bold={p.bold}>{p.v}</NumField><SpinButtons /></Param>)}
          <Param><ParamName $w={39} $c="#800000" $pt={5}>Cur. v</ParamName><NumField $w={37} $h={19} $c="#000">4</NumField></Param>
          {params2.map(p => <Param key={p.n}><ParamName $w={p.w} $pt={4} $c={p.red ? '#800000' : undefined}>{p.n}</ParamName><NumField $w={32} $h={20} $c="#000">{p.v}</NumField><SpinButtons /></Param>)}
          <Param><ParamName $w={28} $pt={4}>VG</ParamName><NumField $w={32} $h={20} $c="#000">52</NumField><SpinButtons /></Param>
        </Params>
      </ElectricBody>
    </Group>
  </Electric>
);

const Key = ({ ml, on, w, children, led = true, ...rest }: any) => (
  <Station $ml={ml}>{led && <Led $on={on} $bg="#b4b4b4" />}<Bevel $w={w} $h={33} {...rest}>{children}</Bevel></Station>
);

const RemoteArea = () => (
  <Remote>
    <JogPad>
      <Bevel $w={33} $h={33} $bg={GREENISH}><Arrow45 r={0} /></Bevel><Bevel $w={33} $h={33} $bg={GREENISH} $size={12}>Y/V+</Bevel><Bevel $w={33} $h={33} $bg={GREENISH}><Arrow45 r={90} /></Bevel>
      <Bevel $w={33} $h={33} $bg={GREENISH} $size={12}>X/U-</Bevel><Bevel $w={33} $h={33} $bg={GREENISH} $ring="#ff7f50" $c="#0000e0" $size={12}>UV.0</Bevel><Bevel $w={33} $h={33} $bg={GREENISH} $size={12}>X/U+</Bevel>
      <Bevel $w={33} $h={33} $bg={GREENISH}><Arrow45 r={270} /></Bevel><Bevel $w={33} $h={33} $bg={GREENISH} $size={12}>Y/V-</Bevel><Bevel $w={33} $h={33} $bg={GREENISH}><Arrow45 r={180} /></Bevel>
    </JogPad>
    <Section $w={204}>
      <KeyRow $pl={10}>
        <Key w={45} $size={11.5}><span>{'\n'}x1000</span><Overlay width="27" height="24"><Ripple /></Overlay></Key>
        <Key ml={5} w={45} $size={11.5}><span>{'\n'}x100</span><Overlay width="27" height="24"><Ripple small /></Overlay></Key>
        <Key ml={5} w={45} $size={13}>x10</Key>
        <Station $ml={9} $lift={8}><Bevel $w={33} $h={33} $bg={GREENISH}>Z+</Bevel></Station>
      </KeyRow>
      <KeyRow $mt={9} $pl={10}>
        <Key w={45} $bg="#a4c8f0" $size={13}>XY/UV</Key><Key ml={5} w={45} $size={13}>x1</Key><Key ml={5} w={45} $size={13}>x0.1</Key>
        <Key ml={9} w={33} led={false} $bg={GREENISH}>Z-</Key>
      </KeyRow>
    </Section>
    <Section $w={188}>
      <KeyRow $pl={8}>
        <Key on w={50} $bg={PALE} $left={6} $size={12.6}><span><BlueText>Z</BlueText><GreenText>Limit</GreenText>{'\n'}<RedText>Set</RedText></span></Key>
        <Key ml={9} w={55} $bg={PALE} $left={10} $size={12.6}>{'S.Pos\nRtn.'}</Key>
        <Key ml={7} w={55} $bg={PALE} $left={3} $size={12.6}>{'LBS.Pos\nRtn.'}</Key>
      </KeyRow>
      <KeyRow $mt={9} $pl={8}>
        <Key led={false} w={50} $bg={PALE} $left={6} $size={12.6}>{'ZLimit\nRtn.'}<WarnSpot><Warn /></WarnSpot></Key>
        <Key ml={9} w={55} $bg={PALE} $left={10} $size={12.6}>{'H.Pos\nRtn.'}</Key>
        <Key ml={1} w={45} $bg={PALE} $left={5} $size={12.6}>{'H.Pos\nRtn.'}<NoSign /></Key>
      </KeyRow>
    </Section>
    <Section $w={507}>
      <KeyRow $pl={9}>
        <SideLeds $gap={1}><i /><i /><i data-on="1" /><i data-on="1" /></SideLeds>
        <Key w={41}><TankIcon /><MiniKey $x={39} $y={15} $w={13}>D</MiniKey></Key>
        <Key ml={13} w={41}><SprayPair /></Key>
        <Key ml={4} w={41}>Ion</Key>
        <Key ml={5} on w={41}><CutIcon /></Key>
        <Key ml={5} w={41} $ring={TEAL}><WaveArrow /></Key>
        <Key ml={4} w={41} $ring={TEAL}><CornerIcon /></Key>
        <Key ml={5} w={41} $ring={TEAL}><BuzzerIcon /></Key>
        <Key ml={13} w={59} $bg="#d0d0dc" $c="#222" $kr>수동</Key>
        <ReadyFrame><Bevel $w={65} $h={33} $bg="#008000" $c="#e8fbe8" $size={13}>Ready</Bevel></ReadyFrame>
      </KeyRow>
      <KeyRow $mt={10} $pl={11}>
        <Key w={53} $bg="#3399ff" $c="#fff" $size={12.5} $ring="#0a500a">A. Start<MiniKey $x={-7} $y={-16} $w={18}>S</MiniKey></Key>
        <SideLeds $gap={4} $pb={3} $ml={6}><i /><i data-on="1" /></SideLeds>
        <Key w={41}><BeltIcon /></Key>
        <Key ml={14} w={41}><SprayIcon /></Key>
        <Key ml={5} w={41} $bg="#9494fc"><BoltIcon /></Key>
        <Key ml={9} on w={53} $bg="#008000" $c="#e8fbe8" $size={12.5} $ring="#044a04">Start</Key>
        <Key ml={5} w={53} $bg="#ff0000" $c="#fff" $size={12.5} $ring="#800000">Stop</Key>
        <Key ml={13} on w={59} $bg={TAN} $c="#111" $kr>자동</Key>
        <Key ml={19} led={false} w={65} $bg="#ff8000" $c="#2a1a08">Reset</Key>
      </KeyRow>
    </Section>
  </Remote>
);

export default function App() {
  return (
    <Desktop>
      <Global />
      <Window>
        <TitleBar><AppBadge>SPM</AppBadge><Title>SPM EzCut Ver. 7.199</Title><CloseBox><CloseX /></CloseBox></TitleBar>
        <MenuBar>
          <MenuItem $w={32}>File</MenuItem><MenuItem $w={40}>View</MenuItem><MenuItem $w={57}>Settings</MenuItem><MenuItem $w={40}>Help</MenuItem>
          <Clock>2023-01-21 PM 03:55:12</Clock>
        </MenuBar>
        <ModeBar>
          <Grip />
          <ModeSlot>수동모드(F1)</ModeSlot><ModeSlot $raised>자동모드(F2)</ModeSlot><ModeSlot $ls={1}>NCData화면(F3)</ModeSlot>
          <ModeSlot $raised>리모트(F4)</ModeSlot><ModeSlot $raised>로그메시지(F5)</ModeSlot><ModeSlot $raised>설정 화면(F6)</ModeSlot>
          <Logo><LogoS>S</LogoS><LogoP>P</LogoP><LogoM>M</LogoM></Logo>
        </ModeBar>
        <Main><LeftArea /><MiddleArea /><RightArea /></Main>
        <ElectricArea />
        <RemoteHead>Remote</RemoteHead>
        <RemoteArea />
        <StatusBar><StatusLamp /><StatusGrid>{statuses.map(([t, bg]) => <StatusCell key={t} $bg={bg}>{t}</StatusCell>)}</StatusGrid></StatusBar>
      </Window>
      <Taskbar />
    </Desktop>
  );
}
